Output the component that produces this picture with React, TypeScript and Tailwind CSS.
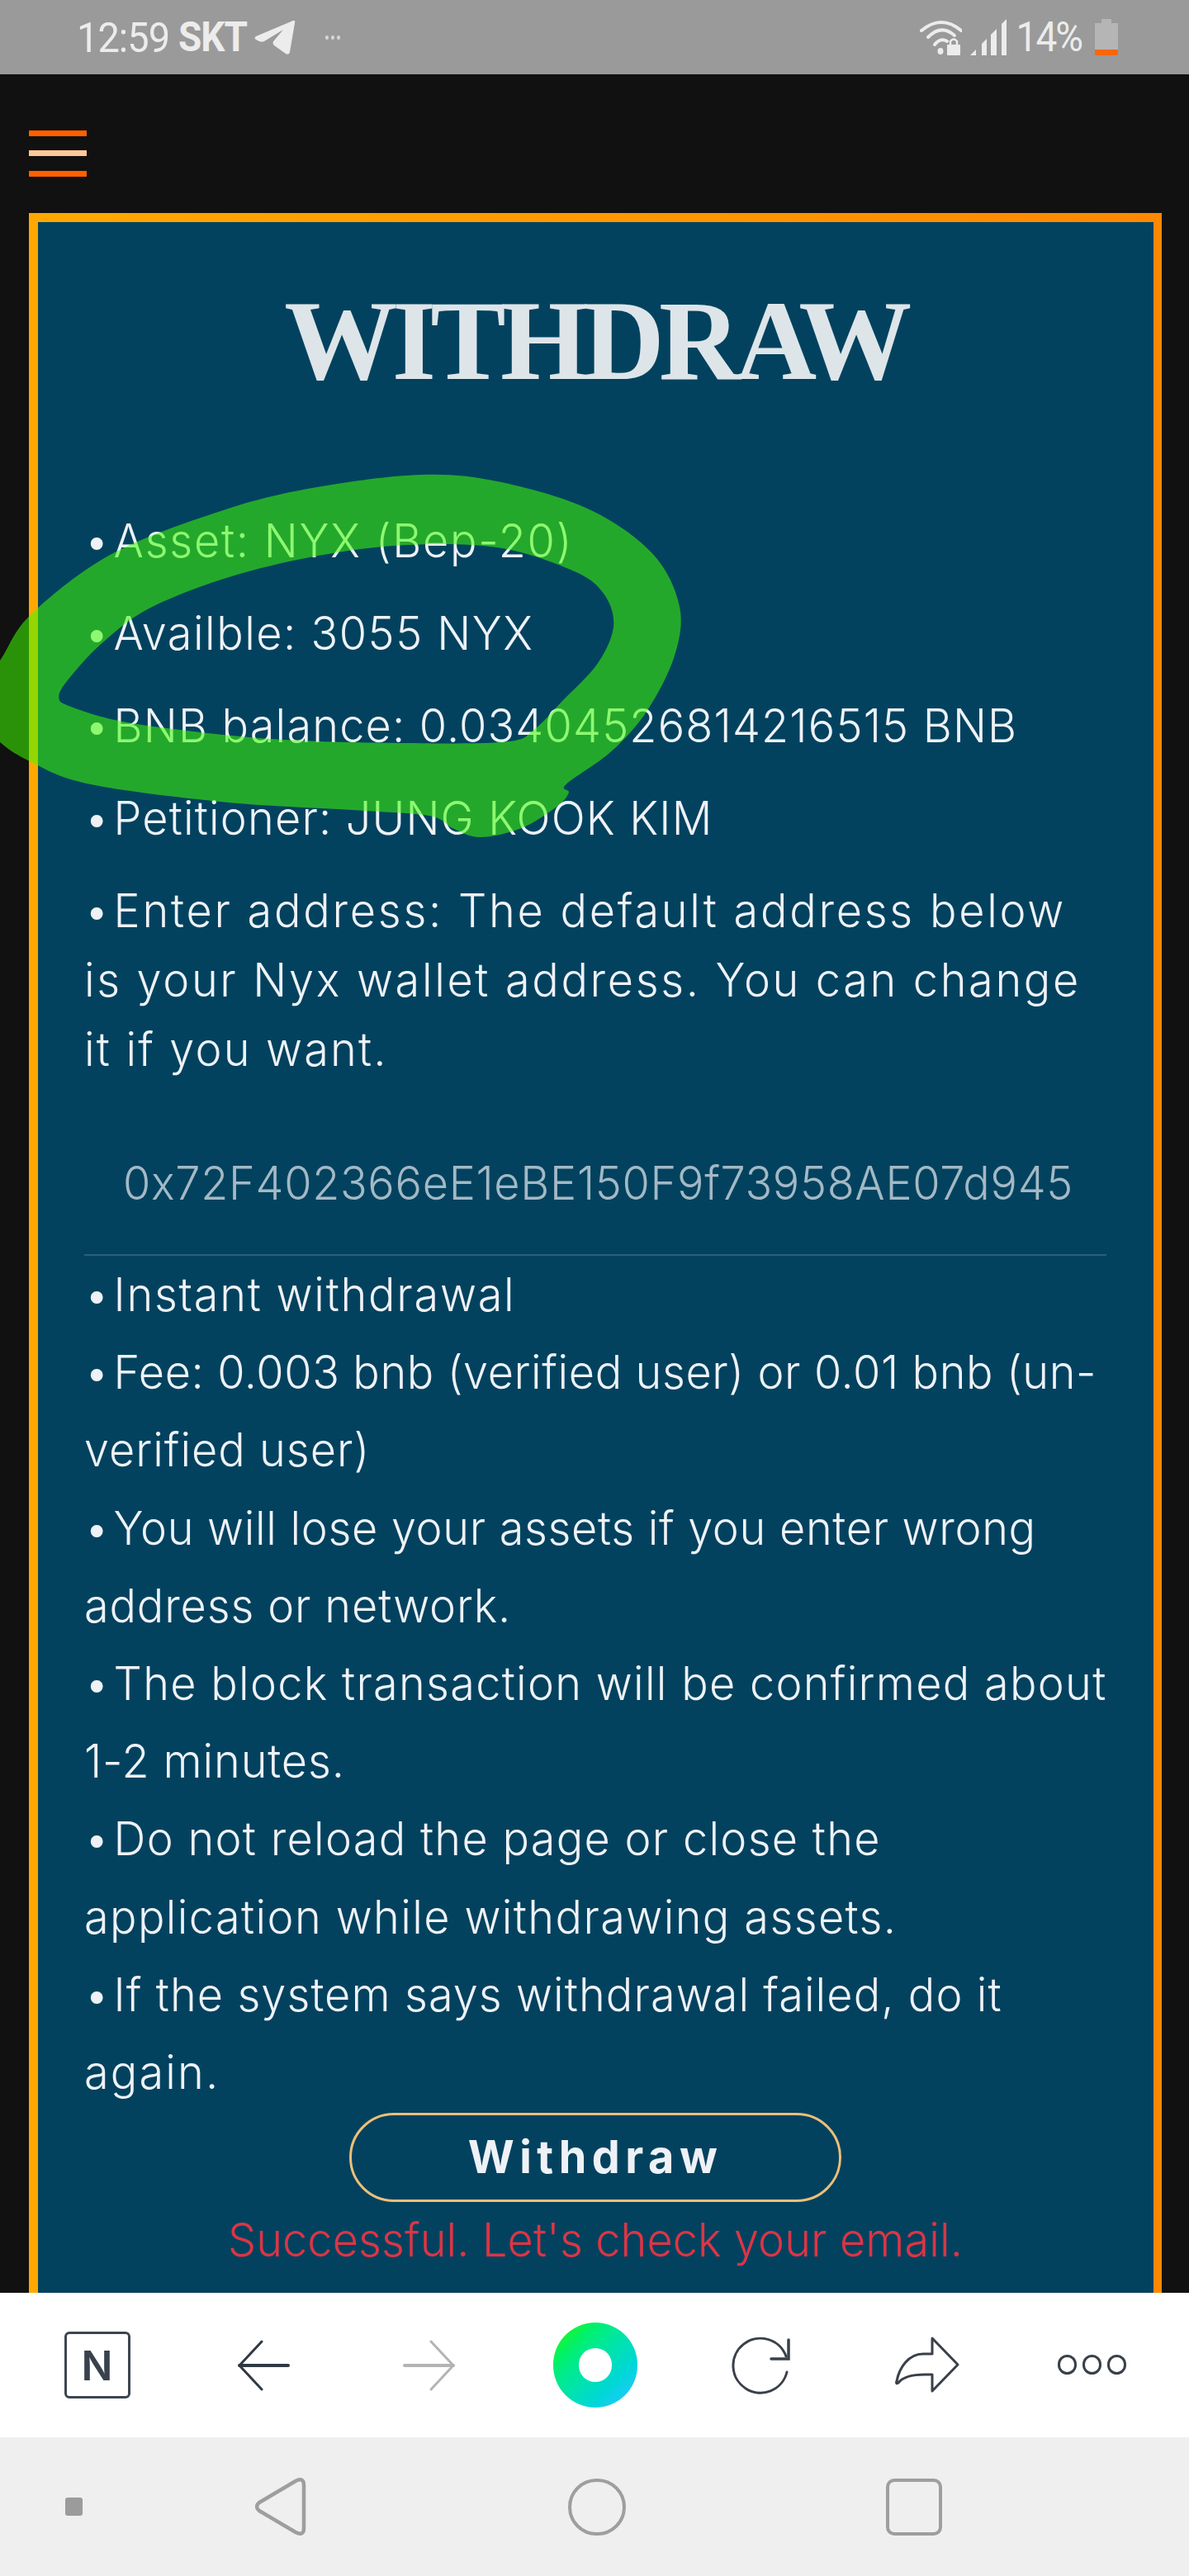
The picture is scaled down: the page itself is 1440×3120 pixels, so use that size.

const outer: [number, number][] = [[1250,1170],[1256,1200],[1230,1250],[1150,1330],[1060,1362],[1000,1330],[950,1285],[800,1265],[500,1235],[200,1170],[70,1090],[-10,1000],[-60,860],[0,720],[70,550],[250,330],[500,170],[700,90],[930,45],[1100,70],[1300,170],[1440,330],[1500,520],[1490,700],[1430,900],[1350,1050]];
const inner: [number, number][] = [[130,850],[160,770],[230,650],[330,530],[500,420],[700,340],[900,300],[1100,310],[1260,390],[1330,470],[1355,590],[1320,730],[1240,870],[1180,970],[1120,1015],[900,1020],[600,1005],[300,950],[160,890]];

function smooth(p: [number, number][]) {
  const n = p.length;
  let d = `M${p[0][0]} ${p[0][1]}`;
  for (let i = 0; i < n; i++) {
    const a = p[(i - 1 + n) % n], b = p[i], c = p[(i + 1) % n], e = p[(i + 2) % n];
    d += `C${b[0] + (c[0] - a[0]) / 6} ${b[1] + (c[1] - a[1]) / 6} ${c[0] - (e[0] - b[0]) / 6} ${c[1] - (e[1] - b[1]) / 6} ${c[0]} ${c[1]}`;
  }
  return d + "Z";
}

const font = { fontFamily: "Inter, 'Noto Sans', sans-serif" };

function Line({ children, cls = "" }: { children: React.ReactNode; cls?: string }) {
  return <span className={`block whitespace-nowrap scale-y-[1.03] ${cls}`}>{children}</span>;
}

function Dot() {
  return <span className="tracking-[-5px]">• </span>;
}

export default function App() {
  return (
    <div className="relative flex h-[3120px] w-[1440px] flex-col overflow-hidden bg-[#111111]" style={font}>
      {/* status bar */}
      <div className="flex h-[90px] shrink-0 items-center bg-[#9a9a9a] text-[#ececec]">
        <div className="ml-[93px] flex items-center">
          <span className="font-['Roboto',sans-serif] text-[47px] leading-none tracking-[-1px] scale-y-[1.06]">12:59</span>
          <span className="ml-[11px] font-['Roboto',sans-serif] text-[46px] font-bold leading-none tracking-[-1px] scale-y-[1.08]">SKT</span>
          <svg width="50" height="43" viewBox="0 0 50 43" className="ml-[9px]" fill="#ececec">
            <path d="M47 1Q50 0 49 4L43 39Q42 43 38 41L24 31Q21 28 24 25L35 12L12 26Q9 27 6 26L2 24Q-1 22 2 20Z" />
          </svg>
          <span className="ml-[36px] flex gap-[3px]">
            <i className="h-[5px] w-[4px] rounded-full bg-[#d5d5d5]" />
            <i className="h-[5px] w-[4px] rounded-full bg-[#d5d5d5]" />
            <i className="h-[5px] w-[4px] rounded-full bg-[#d5d5d5]" />
          </span>
        </div>
        <div className="ml-auto mr-[86px] flex items-center">
          <svg width="51" height="44" viewBox="0 0 51 44" fill="none" stroke="#ececec" strokeWidth="4">
            <path d="M2 14Q26-6 50 14" strokeLinecap="round" />
            <path d="M10 22Q26 6 42 20" strokeLinecap="round" />
            <path d="M18 31Q25 22 33 27" strokeLinecap="round" />
            <ellipse cx="25" cy="39" rx="3.5" ry="4" fill="#ececec" stroke="none" />
            <rect x="33" y="31" width="16" height="13" rx="1" fill="#ececec" stroke="none" />
            <path d="M37 31V27Q41 22 45 27V31" strokeWidth="2.5" />
          </svg>
          <svg width="44" height="44" viewBox="0 0 44 44" className="ml-[10px]" fill="#ececec">
            <path d="M0 44L7 37V44Z M14 30L20 24V44H14Z M25 19L32 12V44H25Z M38 6L44 0V44H38Z" />
          </svg>
          <span className="ml-[12px] font-['Roboto',sans-serif] text-[46px] leading-none tracking-[-2px] scale-y-[1.08]">14%</span>
          <span className="ml-[16px] flex h-[44px] w-[28px] flex-col items-center">
            <i className="h-[5px] w-[12px] rounded-t-[1px] bg-[#b5b5b5]" />
            <i className="flex-1 self-stretch bg-[#b5b5b5]" />
            <i className="h-[7px] self-stretch rounded-b-[2px] bg-[#ff6600]" />
          </span>
        </div>
      </div>

      {/* page */}
      <div className="flex min-h-0 flex-1 flex-col">
        <div className="flex h-[168px] shrink-0 flex-col pl-[35px] pt-[68px]">
          <i className="h-[7px] w-[70px] bg-[#ff6000]" />
          <i className="mt-[17px] h-[7px] w-[70px] bg-[#ffc999]" />
          <i className="mt-[18px] h-[7px] w-[70px] bg-[#ff6000]" />
        </div>
        <div className="ml-[35px] flex min-h-0 w-[1372px] flex-1 flex-col bg-gradient-to-r from-[#ffa800] to-[#ff8800] pl-[11px] pr-[10px] pt-[11px]">
          <div className="min-h-0 flex-1 bg-[#03425f] pl-[56px] pr-[57px] pt-[80px] text-[#eef2f6]">
            <h1 className="mb-[136px] whitespace-nowrap text-center font-['Liberation_Serif',serif] text-[137px] font-bold leading-[128px] tracking-[-6.7px] text-[#dde5e9]">
              WITHDRAW
            </h1>
            <div className="text-[54px] font-light leading-[84px]">
              <p className="mb-[28px]"><Line cls="tracking-[1.75px]"><Dot />Asset: NYX (Bep-20)</Line></p>
              <p className="mb-[28px]"><Line cls="tracking-[1.5px]"><Dot />Availble: 3055 NYX</Line></p>
              <p className="mb-[28px]"><Line cls="tracking-[1.17px]"><Dot />BNB balance: 0.03404526814216515 BNB</Line></p>
              <p className="mb-[28px]"><Line cls="tracking-[1.16px]"><Dot />Petitioner: JUNG KOOK KIM</Line></p>
              <p>
                <Line cls="tracking-[2.75px]"><Dot />Enter address: The default address below</Line>
                <Line cls="tracking-[2.65px]">is your Nyx wallet address. You can change</Line>
                <Line cls="tracking-[2.17px]">it if you want.</Line>
              </p>
            </div>
            <div className="mt-[59px] flex h-[149px] items-start border-b-2 border-[#2a607b] pl-[47px] pt-[31px] text-[54px] font-light leading-[60px] tracking-[0.67px] text-[#a3b9c5]">
              <Line>0x72F402366eE1eBE150F9f73958AE07d945</Line>
            </div>
            <div className="text-[54px] font-light leading-[94.2px]">
              <Line cls="tracking-[1.75px]"><Dot />Instant withdrawal</Line>
              <Line cls="tracking-[0.6px]"><Dot />Fee: 0.003 bnb (verified user) or 0.01 bnb (un-</Line>
              <Line cls="tracking-[1px]">verified user)</Line>
              <Line cls="tracking-[0.68px]"><Dot />You will lose your assets if you enter wrong</Line>
              <Line cls="tracking-[0.85px]">address or network.</Line>
              <Line cls="tracking-[1.28px]"><Dot />The block transaction will be confirmed about</Line>
              <Line cls="tracking-[0.85px]">1-2 minutes.</Line>
              <Line cls="tracking-[1.28px]"><Dot />Do not reload the page or close the</Line>
              <Line cls="tracking-[1.39px]">application while withdrawing assets.</Line>
              <Line cls="tracking-[1.07px]"><Dot />If the system says withdrawal failed, do it</Line>
              <Line cls="tracking-[2.15px]">again.</Line>
            </div>
            <button className="mx-auto mt-[2px] flex h-[108px] w-[596px] items-center justify-center rounded-[54px] border-[3px] border-[#ecc078] pb-[4px] text-[54px] font-bold tracking-[6.5px] text-[#eef2f6]">
              <span className="scale-y-[1.03]">Withdraw</span>
            </button>
            <p className="whitespace-nowrap text-center text-[54px] font-light leading-[92px] tracking-[0.1px] text-[#dc3545]">
              <span className="block scale-y-[1.03]">Successful. Let's check your email.</span>
            </p>
          </div>
        </div>
      </div>

      {/* browser bar */}
      <div className="grid h-[175px] shrink-0 grid-cols-[repeat(6,201px)] items-center bg-white pl-[17px] text-[#39424c]">
        <div className="flex justify-center">
          <span className="flex h-[81px] w-[80px] items-center justify-center rounded-[6px] border-[3px] border-[#3d4650] font-['Inter',sans-serif] text-[50px] font-semibold leading-none">N</span>
        </div>
        <div className="flex justify-center">
          <svg width="64" height="62" viewBox="0 0 64 62" fill="none" stroke="#2f3943" strokeWidth="3" strokeLinecap="round" strokeLinejoin="round">
            <path d="M62 31H3" strokeWidth="4" /><path d="M30 2L3 31L30 60" />
          </svg>
        </div>
        <div className="flex justify-center">
          <svg width="64" height="62" viewBox="0 0 64 62" fill="none" stroke="#b4b4b4" strokeWidth="3" strokeLinecap="round" strokeLinejoin="round">
            <path d="M2 31H61" strokeWidth="4" /><path d="M34 2L61 31L34 60" />
          </svg>
        </div>
        <div className="flex justify-center">
          <span className="flex h-[103px] w-[102px] items-center justify-center rounded-full bg-gradient-to-br from-[#12f53a] from-15% to-[#16cdf0] to-85%">
            <i className="h-[41px] w-[40px] rounded-full bg-white" />
          </span>
        </div>
        <div className="flex justify-center">
          <svg width="71" height="70" viewBox="0 0 71 70" fill="none" stroke="#3a4049" strokeWidth="3" strokeLinecap="round">
            <path d="M67 43A33 33 0 1 1 66 24" /><path d="M69 4V27H48" strokeWidth="3.5" />
          </svg>
        </div>
        <div className="flex justify-center">
          <svg width="78" height="69" viewBox="0 0 78 69" fill="none" stroke="#3a4049" strokeWidth="3" strokeLinejoin="round">
            <path d="M45 2L76 34L45 66V46H36C22 46 10 48 4 56C2 58 1 56 2 54C5 38 16 21 34 21H45Z" />
          </svg>
        </div>
      </div>

      {/* android nav */}
      <div className="flex h-[168px] shrink-0 items-center bg-[#efefef] pl-[79px]">
        <i className="h-[22px] w-[21px] rounded-[3px] bg-[#9b9b9b]" />
        <svg width="62" height="70" viewBox="0 0 62 70" className="ml-[209px]" fill="none" stroke="#9e9e9e" strokeWidth="4.5" strokeLinejoin="round">
          <path d="M5 30L49 4Q59 -1 59 9V61Q59 71 49 66L5 40Q-1 35 5 30Z" />
        </svg>
        <i className="ml-[317px] h-[69px] w-[70px] rounded-full border-[4.5px] border-[#9e9e9e]" />
        <i className="ml-[315px] h-[69px] w-[68px] rounded-[10px] border-[4.5px] border-[#9e9e9e]" />
      </div>

      {/* more dots */}
      <div className="absolute left-[1281px] top-[2852px] flex gap-[7px]">
        <i className="h-[24px] w-[23px] rounded-full border-[3px] border-[#3a4049]" />
        <i className="h-[24px] w-[23px] rounded-full border-[3px] border-[#3a4049]" />
        <i className="h-[24px] w-[23px] rounded-full border-[3px] border-[#3a4049]" />
      </div>

      {/* hand-drawn marker */}
      <svg className="pointer-events-none absolute left-0 top-[560px] opacity-55" width="860" height="480" viewBox="0 0 1568 1440" preserveAspectRatio="none">
        <path d={smooth(outer) + smooth(inner)} fill="#40fd04" fillRule="evenodd" />
      </svg>
    </div>
  );
}
